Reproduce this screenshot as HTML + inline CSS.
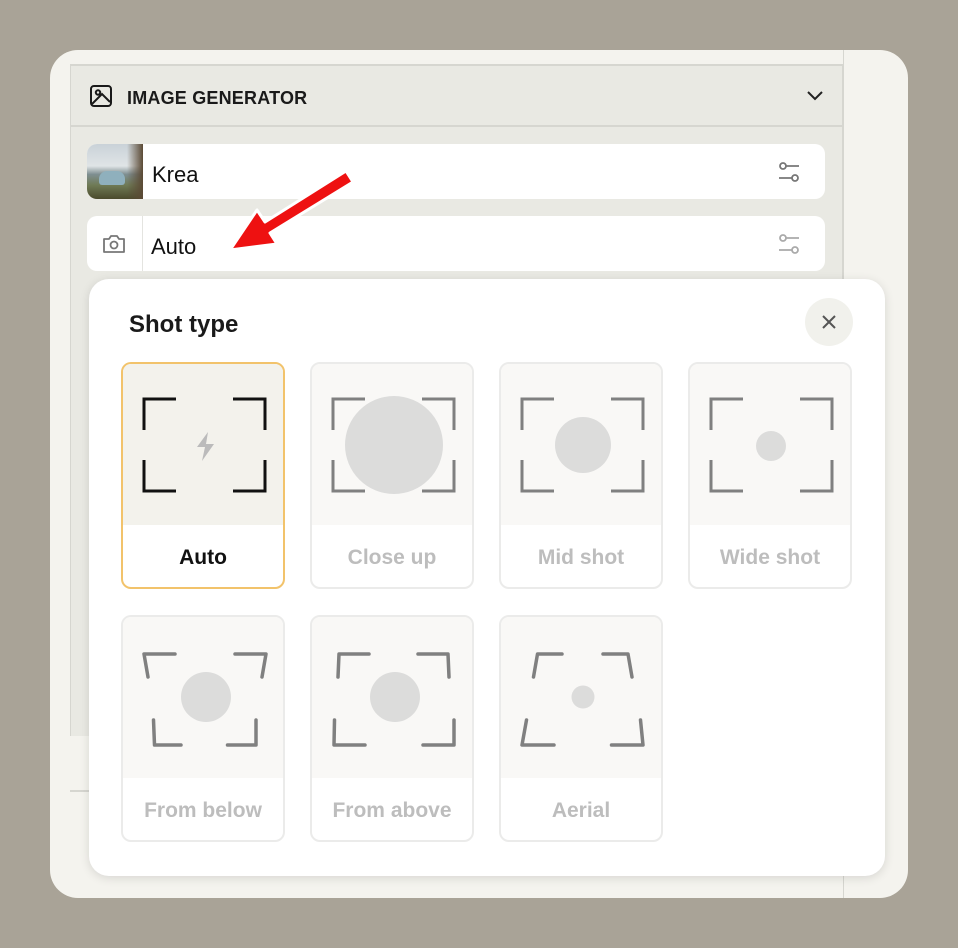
<!DOCTYPE html>
<html><head><style>
*{margin:0;padding:0;box-sizing:border-box}
body{width:958px;height:948px;background:#a9a397;position:relative;overflow:hidden;font-family:"Liberation Sans",sans-serif}
.win{position:absolute;left:50px;top:50px;width:858px;height:848px;background:#f4f3ee;border-radius:28px;overflow:hidden}
.panel{position:absolute;left:20px;top:14px;width:773px;height:672px;background:#e9e9e3;border-left:1px solid #d6d6d0;border-right:1px solid #d6d6d0}
.hdr{position:absolute;left:0;top:0;width:100%;height:63px;border-top:2px solid #d6d6d0;border-bottom:2px solid #d6d6d0}
.hdr span{position:absolute;left:56px;top:22px;font-weight:bold;font-size:18px;color:#1a1a1a;letter-spacing:.2px}
.row{position:absolute;left:37px;width:738px;height:55px;background:#fff;border-radius:10px;overflow:hidden}
.row span{position:absolute;left:65px;top:18px;font-size:22px;color:#111}
.pop{position:absolute;left:89px;top:279px;width:796px;height:597px;background:#fff;border-radius:20px;box-shadow:0 2px 10px rgba(0,0,0,.12)}
.card{position:absolute;width:164px;height:227px;border:2px solid #ebebea;border-radius:10px;background:#fff;overflow:hidden}
.card .im{position:absolute;left:0;top:0;width:100%;height:161px;background:#f9f8f6}
.card svg{position:absolute;left:0;top:0}
.card .lb{position:absolute;left:0;width:100%;top:182px;text-align:center;font-size:21px;font-weight:bold;color:#bdbdbd}
.br{fill:none;stroke:#808080;stroke-width:3.5;stroke-linecap:round;stroke-linejoin:round}
</style></head><body>
<div class="win">
 <div style="position:absolute;left:793px;top:0;width:1px;height:848px;background:#d6d6d0"></div>
 <div class="panel">
  <div class="hdr">
   <svg style="position:absolute;left:18px;top:18px" width="24" height="24" viewBox="0 0 24 24" fill="none" stroke="#1a1a1a" stroke-width="2"><rect x="2" y="2" width="20" height="20" rx="3"/><circle cx="9" cy="8.5" r="2.2"/><path d="M3 20l10-10 8 8"/></svg>
   <span>IMAGE GENERATOR</span>
   <svg style="position:absolute;left:735px;top:24px" width="18" height="12" viewBox="0 0 18 12" fill="none" stroke="#222" stroke-width="2"><path d="M2 2l7 7 7-7"/></svg>
  </div>
 </div>
 <div style="position:absolute;left:20px;top:740px;width:773px;height:2px;background:#d6d6d0"></div>
 <div class="row" style="top:94px">
  <div style="position:absolute;left:0;top:0;width:56px;height:55px;background:linear-gradient(180deg,#c9d2d8 0%,#dfe4e6 40%,#7f8f92 55%,#6f7a55 75%,#4a4a2c 100%)"></div>
  <div style="position:absolute;left:40px;top:0;width:16px;height:55px;background:linear-gradient(90deg,rgba(80,60,40,0),#5b4a35)"></div>
  <div style="position:absolute;left:12px;top:27px;width:26px;height:14px;background:#8fb0bd;border-radius:8px 8px 3px 3px"></div>
  <span>Krea</span>
  <svg style="position:absolute;left:690px;top:16px" width="24" height="24" viewBox="0 0 24 24" fill="none" stroke="#777" stroke-width="1.8"><circle cx="6" cy="6" r="3"/><path d="M9 6h13"/><circle cx="18" cy="18" r="3"/><path d="M2 18h13"/></svg>
 </div>
 <div class="row" style="top:166px">
  <div style="position:absolute;left:55px;top:0;width:1px;height:55px;background:#e4e4e0"></div>
  <svg style="position:absolute;left:14px;top:17px" width="26" height="22" viewBox="0 0 26 22" fill="none" stroke="#777" stroke-width="1.8"><path d="M3 6h5l2-3h6l2 3h5v13H3z" stroke-linejoin="round"/><circle cx="13" cy="12" r="3.5"/></svg>
  <span style="left:64px">Auto</span>
  <svg style="position:absolute;left:690px;top:16px" width="24" height="24" viewBox="0 0 24 24" fill="none" stroke="#aaa" stroke-width="1.8"><circle cx="6" cy="6" r="3"/><path d="M9 6h13"/><circle cx="18" cy="18" r="3"/><path d="M2 18h13"/></svg>
 </div>
</div>
<svg style="position:absolute;left:220px;top:160px" width="145" height="100" viewBox="220 160 145 100">
 <path d="M346 171 L265 222 L257 210 L230 250 L277 244 L270 233 L353 182 Z" fill="#ee1111" stroke="#fff" stroke-width="3" stroke-linejoin="round"/>
</svg>
<div class="pop">
 <div style="position:absolute;left:40px;top:32px;font-size:24px;font-weight:bold;color:#1a1a1a">Shot type</div>
 <div style="position:absolute;left:716px;top:19px;width:48px;height:48px;border-radius:50%;background:#f1f1ec"></div>
 <svg style="position:absolute;left:732px;top:35px" width="16" height="16" viewBox="0 0 16 16" stroke="#555" stroke-width="2"><path d="M2 2l12 12M14 2L2 14"/></svg>
</div>

<div class="card" style="left:121px;top:362px;border-color:#f2c36b;">
 <div class="im" style="background:#f3f2ec"></div>
 <svg width="164" height="227"><g fill="none" stroke="#111" stroke-width="3"><path d="M21 66V35h32M110 35h32v31M21 96v31h32M110 127h32V96"/></g><path d="M85 68l-11 15h8l-3 14 12-17h-8z" fill="#bbb"/></svg>
 <div class="lb" style="color:#111">Auto</div>
</div>
<div class="card" style="left:310px;top:362px">
 <div class="im"></div>
 <svg width="164" height="227"><g fill="none" stroke="#808080" stroke-width="3"><path d="M21 66V35h32M110 35h32v31M21 96v31h32M110 127h32V96"/></g><circle cx="82" cy="81" r="49" fill="#dcdcdb"/></svg>
 <div class="lb">Close up</div>
</div>
<div class="card" style="left:499px;top:362px">
 <div class="im"></div>
 <svg width="164" height="227"><g fill="none" stroke="#808080" stroke-width="3"><path d="M21 66V35h32M110 35h32v31M21 96v31h32M110 127h32V96"/></g><circle cx="82" cy="81" r="28" fill="#dcdcdb"/></svg>
 <div class="lb">Mid shot</div>
</div>
<div class="card" style="left:688px;top:362px">
 <div class="im"></div>
 <svg width="164" height="227"><g fill="none" stroke="#808080" stroke-width="3"><path d="M21 66V35h32M110 35h32v31M21 96v31h32M110 127h32V96"/></g><circle cx="81" cy="82" r="15" fill="#dcdcdb"/></svg>
 <div class="lb">Wide shot</div>
</div>
<div class="card" style="left:121px;top:615px">
 <div class="im"></div>
 <svg width="164" height="227"><path class="br" d="M25 60L21 37H52M112 37H143L139 60M30.5 103L31.5 128H58M133 103V128H104.5"/><circle cx="83" cy="80" r="25" fill="#dcdcdb"/></svg>
 <div class="lb">From below</div>
</div>
<div class="card" style="left:310px;top:615px">
 <div class="im"></div>
 <svg width="164" height="227"><path class="br" d="M26 60L27 37H57M106 37H136L137 60M22.5 103L22 128H53M142 103V128H111"/><circle cx="83" cy="80" r="25" fill="#dcdcdb"/></svg>
 <div class="lb">From above</div>
</div>
<div class="card" style="left:499px;top:615px">
 <div class="im"></div>
 <svg width="164" height="227"><path class="br" d="M32.5 60L36.5 37H61M102 37H127L131 60M25.5 103L21 128H53M139.5 103L142 128H110.5"/><circle cx="82" cy="80" r="11.5" fill="#dcdcdb"/></svg>
 <div class="lb">Aerial</div>
</div>
</body></html>
